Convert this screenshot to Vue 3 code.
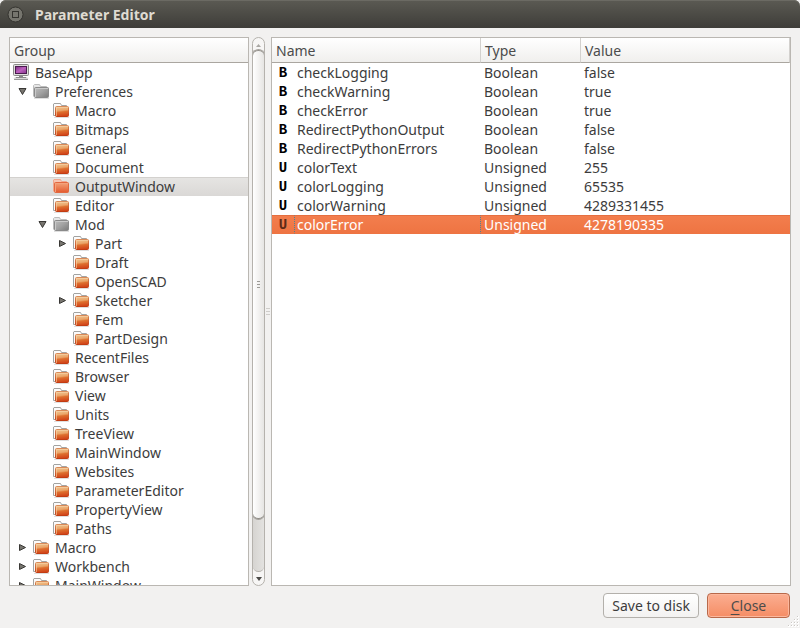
<script setup>
import { computed, ref } from 'vue'

const entries = ref([
  { name: 'BaseApp', depth: 0, icon: 'computer' },
  { name: 'Preferences', depth: 1, icon: 'open', open: true, expandable: true },
  { name: 'Macro', depth: 2 },
  { name: 'Bitmaps', depth: 2 },
  { name: 'General', depth: 2 },
  { name: 'Document', depth: 2 },
  { name: 'OutputWindow', depth: 2 },
  { name: 'Editor', depth: 2 },
  { name: 'Mod', depth: 2, icon: 'open', open: true, expandable: true },
  { name: 'Part', depth: 3, expandable: true },
  { name: 'Draft', depth: 3 },
  { name: 'OpenSCAD', depth: 3 },
  { name: 'Sketcher', depth: 3, expandable: true },
  { name: 'Fem', depth: 3 },
  { name: 'PartDesign', depth: 3 },
  { name: 'RecentFiles', depth: 2 },
  { name: 'Browser', depth: 2 },
  { name: 'View', depth: 2 },
  { name: 'Units', depth: 2 },
  { name: 'TreeView', depth: 2 },
  { name: 'MainWindow', depth: 2 },
  { name: 'Websites', depth: 2 },
  { name: 'ParameterEditor', depth: 2 },
  { name: 'PropertyView', depth: 2 },
  { name: 'Paths', depth: 2 },
  { name: 'Macro', depth: 1, expandable: true },
  { name: 'Workbench', depth: 1, expandable: true },
  { name: 'MainWindow', depth: 1, expandable: true }
])

const selectedGroup = ref(6)

const visibleEntries = computed(() => {
  const rows = []
  let hiddenBelow = Infinity
  entries.value.forEach((entry, index) => {
    if (entry.depth > hiddenBelow) return
    hiddenBelow = entry.expandable && !entry.open ? entry.depth : Infinity
    rows.push({ entry, index })
  })
  return rows
})

const parameters = [
  { name: 'checkLogging', type: 'Boolean', value: 'false' },
  { name: 'checkWarning', type: 'Boolean', value: 'true' },
  { name: 'checkError', type: 'Boolean', value: 'true' },
  { name: 'RedirectPythonOutput', type: 'Boolean', value: 'false' },
  { name: 'RedirectPythonErrors', type: 'Boolean', value: 'false' },
  { name: 'colorText', type: 'Unsigned', value: '255' },
  { name: 'colorLogging', type: 'Unsigned', value: '65535' },
  { name: 'colorWarning', type: 'Unsigned', value: '4289331455' },
  { name: 'colorError', type: 'Unsigned', value: '4278190335' }
]
const selectedParameter = ref(8)
</script>

<template>
  <div class="window">
    <svg class="defs" width="0" height="0" aria-hidden="true">
      <defs>
        <linearGradient id="folder-fill" x1="0" y1="0" x2="0.15" y2="1">
          <stop offset="0" stop-color="#f0cb96" />
          <stop offset="0.45" stop-color="#eaa468" />
          <stop offset="0.6" stop-color="#de702f" />
          <stop offset="1" stop-color="#d2461a" />
        </linearGradient>
        <linearGradient id="folder-edge" x1="0" y1="0" x2="0" y2="1">
          <stop offset="0" stop-color="#d98a58" />
          <stop offset="1" stop-color="#c23c12" />
        </linearGradient>
        <linearGradient id="folder-selected" x1="0" y1="0" x2="0" y2="1">
          <stop offset="0" stop-color="#f3a47a" />
          <stop offset="1" stop-color="#e45a2e" />
        </linearGradient>
        <linearGradient id="folder-grey" x1="0" y1="0" x2="1" y2="1">
          <stop offset="0" stop-color="#bdbdbd" />
          <stop offset="0.5" stop-color="#a2a2a2" />
          <stop offset="1" stop-color="#7b7b7b" />
        </linearGradient>
        <linearGradient id="screen" x1="0" y1="0" x2="1" y2="1">
          <stop offset="0" stop-color="#7b2c80" />
          <stop offset="0.5" stop-color="#bd62bf" />
          <stop offset="1" stop-color="#84318a" />
        </linearGradient>
      </defs>
    </svg>

    <header class="titlebar">
      <button class="window-button" type="button" aria-label="Maximize">
        <svg width="17" height="17" viewBox="0 0 17 17">
          <circle cx="8.5" cy="8.5" r="7.5" fill="#76756e" stroke="#34332f" />
          <rect x="5.5" y="5.5" width="6" height="6" fill="none" stroke="#34332f" />
        </svg>
      </button>
      <h1>Parameter Editor</h1>
    </header>

    <main class="content">
      <section class="panel groups">
        <div class="heading">Group</div>
        <ul class="tree" role="tree">
          <li
            v-for="{ entry, index } in visibleEntries"
            :key="index"
            role="treeitem"
            :class="['node', 'depth-' + entry.depth, { selected: index === selectedGroup }]"
            :aria-selected="index === selectedGroup"
            @click="selectedGroup = index"
          >
            <span v-if="entry.depth" class="branch">
              <button
                v-if="entry.expandable"
                type="button"
                class="toggle"
                :aria-label="entry.name"
                :aria-expanded="!!entry.open"
                @click.stop="entry.open = !entry.open"
              >
                <svg width="9" height="9" viewBox="0 0 9 9">
                  <path v-if="entry.open" d="M1 1.5H8L4.5 7.5Z" fill="#77756f" stroke="#383734" />
                  <path v-else d="M1.5 1.5L7.5 4.5L1.5 7.5Z" fill="#77756f" stroke="#383734" />
                </svg>
              </button>
            </span>
            <svg v-if="entry.icon === 'computer'" class="icon" viewBox="0 0 16 16">
              <rect x=".5" y=".5" width="15" height="11" rx="1" fill="#dededc" stroke="#8a8a88" />
              <rect x="2.5" y="2.5" width="11" height="7" fill="url(#screen)" stroke="#4a1c4e" />
              <path d="M6 12H10V13H6Z" fill="#888" />
              <path d="M2 13H14L15.5 15H.5Z" fill="#d8d8d6" />
              <path d="M1 15.5H15" stroke="#999" />
              <path d="M3 13.5H13" stroke="#8a8a8a" />
            </svg>
            <svg v-else-if="entry.icon === 'open'" class="icon" viewBox="0 0 16 16">
              <path d="M.5 13.5V2.5L1.5 1.5H6.5L7.5 3.5H13.5V13" fill="#e6e6e6" stroke="#bcbcbc" />
              <path d="M1 15.5H16" stroke="#000" opacity=".12" />
              <rect x="1.5" y="4.5" width="14" height="10" rx="1" fill="url(#folder-grey)" stroke="#8a8a8a" />
              <path d="M2.5 14V5.5H15" fill="none" stroke="#c9c9c9" />
            </svg>
            <svg v-else class="icon" viewBox="0 0 16 16">
              <template v-if="index === selectedGroup">
                <path d="M.5 13.5V2L1 1.5H7.5L8.5 3.5H13.5V5" fill="#f7c6b4" stroke="#f0a78e" />
                <rect x="1.5" y="4.5" width="14" height="10" rx="1" fill="url(#folder-selected)" stroke="#e2683f" />
                <path d="M2.5 14V5.5H15" fill="none" stroke="#f3a27c" />
              </template>
              <template v-else>
                <path d="M2.5 13.5H.5V2L1 1.5H7.5L8.5 3.5H13.5V5" fill="#fbfbfb" stroke="#a3a3a1" />
                <path d="M1 15.5H16" stroke="#000" opacity=".12" />
                <rect x="2.5" y="4.5" width="13" height="10" rx="1" fill="url(#folder-fill)" stroke="url(#folder-edge)" />
                <path d="M3.5 14V5.5H15" fill="none" stroke="#f6d3aa" opacity=".6" />
              </template>
            </svg>
            <span class="name">{{ entry.name }}</span>
          </li>
        </ul>
      </section>

      <div class="scrollbar" role="scrollbar" aria-orientation="vertical" aria-valuenow="0" aria-label="Groups">
        <svg class="arrow up" width="5" height="3" viewBox="0 0 5 3"><path d="M0 3L2.5 0L5 3Z" fill="#a9a7a3" /></svg>
        <div class="track">
          <div class="thumb"><i></i><i></i><i></i></div>
        </div>
        <svg class="arrow down" width="6" height="4" viewBox="0 0 6 4"><path d="M0 0H6L3 4Z" fill="#4c4b48" /></svg>
      </div>

      <div class="splitter"><i></i><i></i><i></i></div>

      <section class="panel values">
        <table>
          <colgroup>
            <col class="col-name" />
            <col class="col-type" />
            <col />
          </colgroup>
          <thead>
            <tr><th>Name</th><th>Type</th><th>Value</th></tr>
          </thead>
          <tbody>
            <tr
              v-for="(parameter, index) in parameters"
              :key="parameter.name"
              :class="{ selected: index === selectedParameter }"
              @click="selectedParameter = index"
            >
              <td class="name-cell">
                <div class="name-layout">
                  <span class="kind">{{ parameter.type[0] }}</span>
                  <span class="label">{{ parameter.name }}</span>
                </div>
              </td>
              <td>{{ parameter.type }}</td>
              <td>{{ parameter.value }}</td>
            </tr>
          </tbody>
        </table>
      </section>
    </main>

    <footer class="actions">
      <button type="button" class="action">Save to disk</button>
      <button type="button" class="action primary"><u>C</u>lose</button>
      <svg class="grip" width="12" height="12" viewBox="0 0 12 12">
        <path
          d="M9 1h2M6 4h2M9 4h2M3 7h2M6 7h2M9 7h2M0 10h2M3 10h2M6 10h2M9 10h2"
          stroke="#fff"
          stroke-width="2"
        />
        <path
          d="M9 .5h1M6 3.5h1M9 3.5h1M3 6.5h1M6 6.5h1M9 6.5h1M0 9.5h1M3 9.5h1M6 9.5h1M9 9.5h1"
          stroke="#cbc8c4"
        />
      </svg>
    </footer>
  </div>
</template>

<style>
body {
  background: #f2f1f0;
}
</style>

<style scoped>
.window {
  box-sizing: border-box;
  display: flex;
  flex-direction: column;
  height: 100vh;
  background: #f2f1f0;
  color: #3c3c3c;
  font-family: "Noto Sans", "Open Sans", sans-serif;
  font-size: 14px;
  line-height: 19px;
}

.defs {
  position: absolute;
}

button {
  font: inherit;
  color: inherit;
}

.titlebar {
  box-sizing: border-box;
  flex: none;
  display: flex;
  align-items: center;
  gap: 11px;
  height: 28px;
  padding: 1px 7px 0;
  border-radius: 6px 6px 0 0;
  background: linear-gradient(#5b5a53, #3e3d39);
  box-shadow: inset 0 1px #6b6a63;
}

.window-button {
  display: flex;
  padding: 0;
  border: 0;
  background: none;
}

h1 {
  margin: 0;
  color: #dfdbd2;
  font-size: 14px;
  font-weight: 700;
}

.content {
  flex: 1;
  display: flex;
  min-height: 0;
  padding: 9px 9px 0;
}

.panel {
  box-sizing: border-box;
  overflow: hidden;
  border: 1px solid #bab7b2;
  background: #fff;
}

.groups {
  flex: 0 0 240px;
}

.values {
  flex: 1;
  min-width: 0;
}

.heading,
th {
  box-sizing: border-box;
  height: 25px;
  padding: 1px 4px 0;
  border-bottom: 1px solid #aaa6a0;
  background: linear-gradient(#fff, #f0efed);
  color: #4c4c4c;
  font-weight: 400;
  line-height: 23px;
  text-align: left;
}

.tree {
  margin: 0;
  padding: 0;
  list-style: none;
}

.node {
  display: flex;
  align-items: center;
  height: 19px;
  padding-left: 3px;
}

.node.selected {
  background: linear-gradient(#e6e5e3, #dad8d6);
  box-shadow: inset 0 1px #d3d1ce;
}

.depth-2 {
  padding-left: 23px;
}

.depth-3 {
  padding-left: 43px;
}

.branch {
  flex: 0 0 20px;
  display: flex;
  padding-left: 5px;
  box-sizing: border-box;
}

.toggle {
  display: flex;
  padding: 0;
  border: 0;
  background: none;
}

.icon {
  flex: none;
  align-self: flex-start;
  width: 16px;
  height: 16px;
  margin: 1px 6px 0 0;
}

.name {
  white-space: nowrap;
}

.scrollbar {
  box-sizing: border-box;
  display: flex;
  flex-direction: column;
  align-items: center;
  flex: 0 0 13px;
  margin-left: 3px;
  border: 1px solid #b5b2ad;
  border-radius: 7px;
  background: #f7f6f5;
  overflow: hidden;
}

.arrow {
  flex: none;
}

.up {
  margin: 6px 0 3px;
}

.down {
  margin: 5px 0 4px;
}

.track {
  flex: 1;
  align-self: stretch;
  border-bottom: 1px solid #b5b2ad;
  border-radius: 0 0 6px 6px;
  background: linear-gradient(90deg, #d6d4d1, #e3e2e0);
}

.thumb,
.splitter {
  display: flex;
  flex-direction: column;
  align-items: center;
  justify-content: center;
  gap: 2px;
}

.thumb {
  box-sizing: border-box;
  height: 90%;
  border: 1px solid #918e89;
  border-width: 1px 0;
  border-radius: 6px;
  background: linear-gradient(90deg, #fff, #e6e5e3);
  box-shadow: 0 0 0 1px #a3a09b;
}

.thumb i {
  width: 3px;
  height: 1px;
  background: #9c9a96;
}

.splitter {
  flex: 0 0 6px;
}

.splitter i {
  width: 4px;
  height: 1px;
  background: #cfcdca;
}

table {
  width: 100%;
  table-layout: fixed;
  border-spacing: 0;
}

.col-name {
  width: 209px;
}

.col-type {
  width: 100px;
}

th {
  border-right: 1px solid #d3d1ce;
}

td {
  height: 19px;
  padding: 0 3px;
  white-space: nowrap;
}

.name-cell {
  padding: 0;
}

.name-layout {
  display: flex;
  height: 19px;
}

.kind {
  flex: 0 0 22px;
  color: #000;
  font-family: "Liberation Mono", monospace;
  font-size: 14px;
  font-weight: 700;
  line-height: 21px;
  text-align: center;
}

.label {
  flex: 1;
  box-sizing: border-box;
  height: 19px;
  padding-left: 2px;
  border: 1px dotted transparent;
  line-height: 17px;
}

tr.selected td {
  background: linear-gradient(#f37e4e, #ee7442);
  box-shadow: inset 0 1px #e56f40;
  color: #fff;
}

tr.selected .kind {
  color: #5e2a17;
}

tr.selected .label {
  border-left-color: #4f8296;
  border-right-color: #4f8296;
}

.actions {
  flex: none;
  position: relative;
  display: flex;
  justify-content: flex-end;
  gap: 8px;
  padding: 7px 10px 10px;
}

.action {
  box-sizing: border-box;
  height: 25px;
  min-width: 83px;
  padding: 0 8px;
  border: 1px solid #b3b0ab;
  border-radius: 4px;
  background: linear-gradient(#fff, #f3f2f1);
  line-height: 23px;
}

.action.primary {
  border-color: #b8694a;
  background: linear-gradient(#fbae91, #f58d65);
  box-shadow: inset 0 0 0 1px #fcb79d;
  color: #4c4c4c;
}

.action u {
  text-underline-offset: 3px;
}

.grip {
  position: absolute;
  right: 0;
  bottom: 0;
}
</style>
